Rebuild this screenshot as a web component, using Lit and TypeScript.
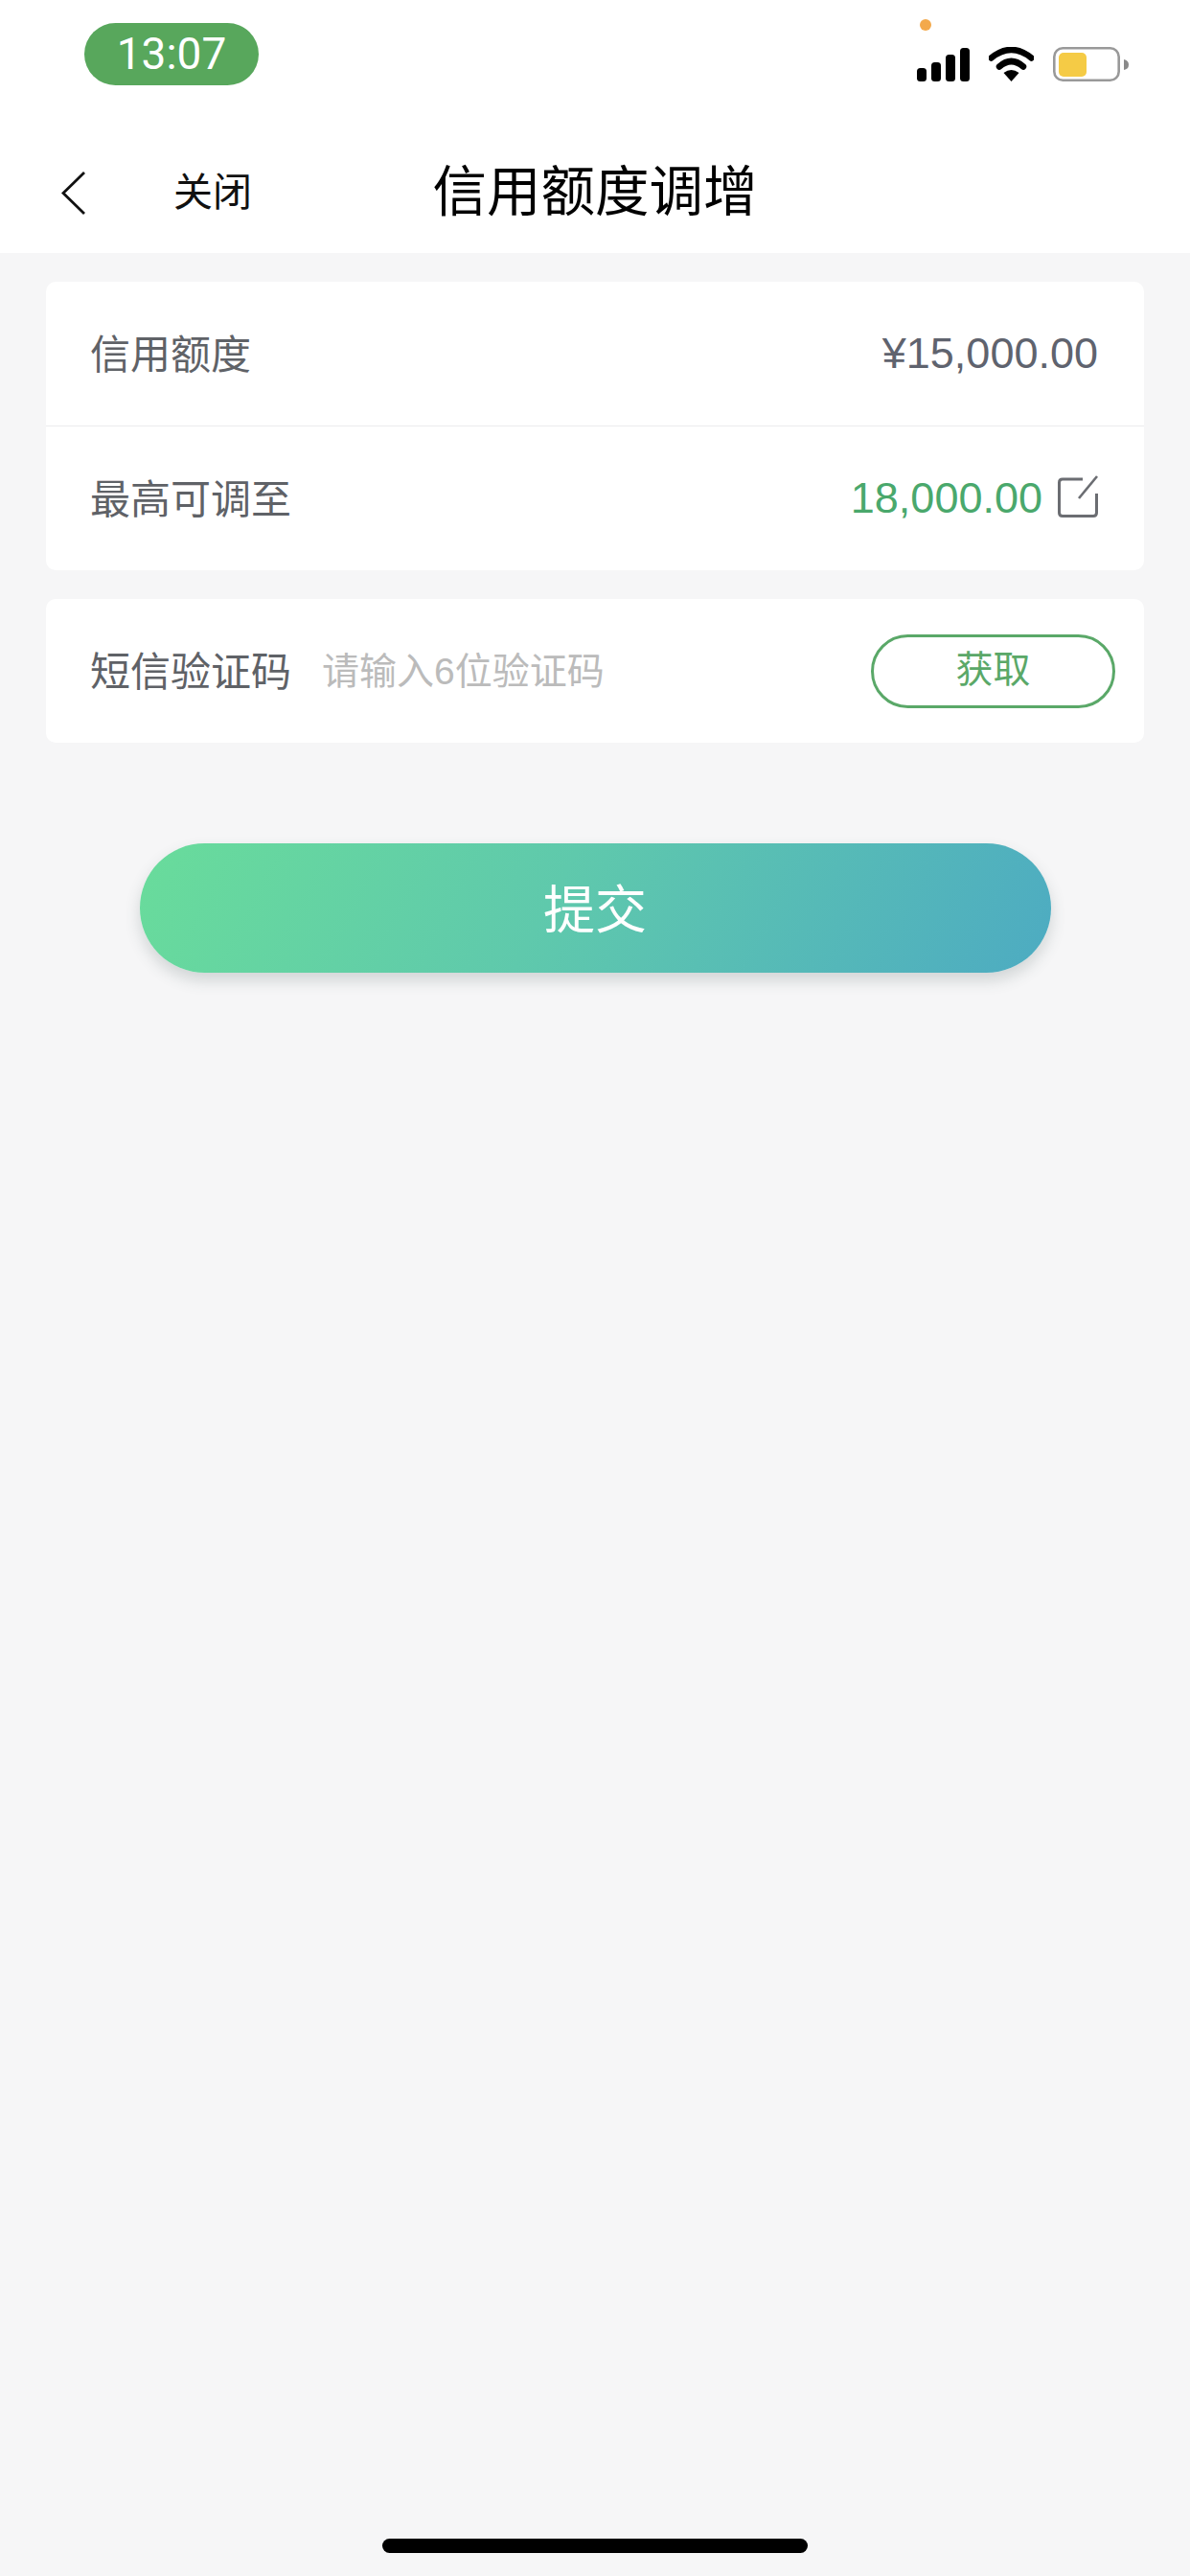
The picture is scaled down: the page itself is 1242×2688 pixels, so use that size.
import { LitElement, html, css } from 'lit';
import { customElement } from 'lit/decorators.js';

@customElement('app-root')
export class AppRoot extends LitElement {
  static styles = css`
    :host {
      display: block;
      font-family: "Liberation Sans", "Noto Sans CJK SC", sans-serif;
    }
    .page {
      width: 1242px;
      height: 2688px;
      background: #f6f6f7;
      display: flex;
      flex-direction: column;
    }
    .top {
      background: #fff;
      height: 264px;
      flex: none;
    }
    .status {
      height: 110px;
      display: flex;
      justify-content: space-between;
      position: relative;
    }
    .time {
      margin: 24px 0 0 88px;
      width: 182px;
      height: 65px;
      border-radius: 33px;
      background: #58a75c;
      color: #fff;
      font: 46px/65px Roboto, sans-serif;
      text-align: center;
    }
    .dot {
      position: absolute;
      left: 960px;
      top: 20px;
      width: 12px;
      height: 12px;
      border-radius: 50%;
      background: #f3a94b;
    }
    .sys {
      display: flex;
      align-items: flex-start;
      gap: 20px;
      margin: 49px 64px 0 0;
    }
    .sys svg { display: block; }
    .nav {
      height: 154px;
      padding-top: 28px;
      box-sizing: border-box;
      display: grid;
      grid-template-columns: 1fr auto 1fr;
      align-items: center;
    }
    .nav-left {
      display: flex;
      align-items: center;
      padding-left: 64px;
      gap: 92px;
    }
    .nav-left svg { display: block; }
    .close {
      font-size: 41px;
      color: #111;
      line-height: 50px;
    }
    .title {
      font-size: 56.5px;
      color: #000;
      line-height: 70px;
    }
    .content {
      padding: 30px 48px 0;
      display: flex;
      flex-direction: column;
      gap: 30px;
    }
    .card {
      background: #fff;
      border-radius: 10px;
    }
    .row {
      height: 150px;
      display: flex;
      align-items: center;
      padding: 0 48px 0 46px;
      box-sizing: border-box;
    }
    .row + .row {
      height: 151px;
      border-top: 1px solid #ececee;
    }
    .label {
      font-size: 42px;
      color: #5f6267;
      flex: none;
      margin-bottom: 6px;
    }
    .amount {
      margin-left: auto;
      font-size: 45px;
      color: #5f636e;
    }
    .amount.up {
      color: #4aa86c;
      margin-right: 16px;
    }
    .edit { display: block; flex: none; margin-top: -4px; }
    .code { padding-right: 30px; }
    .hint {
      margin-left: 32px;
      font-size: 39px;
      color: #bbbbbb;
      margin-bottom: 6px;
    }
    .get {
      margin-left: auto;
      width: 255px;
      height: 77px;
      box-sizing: border-box;
      border: 3px solid #5aa868;
      border-radius: 39px;
      color: #5aa868;
      font-size: 39px;
      line-height: 68px;
      text-align: center;
    }
    .submit {
      align-self: center;
      margin-top: 105px;
      width: 951px;
      height: 135px;
      border-radius: 68px;
      background: linear-gradient(118deg, #69dc9b 0%, #5fc9ac 45%, #4dabc2 100%);
      box-shadow: 0 8px 16px rgba(60, 80, 80, 0.2);
      color: #fff;
      font-size: 54px;
      line-height: 141px;
      text-align: center;
    }
    .home {
      margin: auto auto 24px;
      width: 444px;
      height: 15px;
      border-radius: 8px;
      background: #000;
    }
  `;

  render() {
    return html`
      <div class="page">
        <div class="top">
          <div class="status">
            <div class="time">13:07</div>
            <div class="dot"></div>
            <div class="sys">
              <svg width="55" height="36" viewBox="0 0 55 36">
                <rect x="0" y="22" width="10" height="14" rx="3.5" />
                <rect x="15" y="16" width="10" height="20" rx="3.5" />
                <rect x="30" y="8" width="10" height="28" rx="3.5" />
                <rect x="45" y="1" width="10" height="35" rx="3.5" />
              </svg>
              <svg width="47" height="36" viewBox="0 0 47 36">
                <path d="M2.5 11.5 Q23.5 -5.5 44.5 11.5" fill="none" stroke="#000" stroke-width="6.5" stroke-linecap="round" />
                <path d="M11 20.5 Q23.5 9.5 36 20.5" fill="none" stroke="#000" stroke-width="6.5" stroke-linecap="round" />
                <path d="M15.5 27 Q23.5 21 31.5 27 L23.5 36 Z" />
              </svg>
              <svg width="79" height="36" viewBox="0 0 79 36">
                <rect x="1.3" y="1.3" width="67.4" height="33.4" rx="9" fill="none" stroke="#999" stroke-width="2.6" />
                <rect x="6" y="6" width="29" height="25" rx="5" fill="#f5cb45" />
                <path d="M74 13 Q79 14 79 18.5 Q79 23 74 24 Z" fill="#8a8a8a" />
              </svg>
            </div>
          </div>
          <div class="nav">
            <div class="nav-left">
              <svg width="25" height="45" viewBox="0 0 25 45">
                <path d="M24 1 L2 22.5 L24 44" fill="none" stroke="#111" stroke-width="2.8" />
              </svg>
              <span class="close">关闭</span>
            </div>
            <div class="title">信用额度调增</div>
          </div>
        </div>

        <div class="content">
          <div class="card">
            <div class="row">
              <span class="label">信用额度</span>
              <span class="amount">¥15,000.00</span>
            </div>
            <div class="row">
              <span class="label">最高可调至</span>
              <span class="amount up">18,000.00</span>
              <svg class="edit" width="42" height="44" viewBox="0 0 42 44">
                <path d="M26 4 H5 Q1.5 4 1.5 7.5 V39 Q1.5 42.5 5 42.5 H37 Q40.5 42.5 40.5 39 V19" fill="none" stroke="#6b6d72" stroke-width="3" />
                <path d="M22 24 L41 1" fill="none" stroke="#6b6d72" stroke-width="2.6" />
              </svg>
            </div>
          </div>
          <div class="card">
            <div class="row code">
              <span class="label">短信验证码</span>
              <span class="hint">请输入6位验证码</span>
              <span class="get">获取</span>
            </div>
          </div>
        </div>

        <div class="submit">提交</div>
        <div class="home"></div>
      </div>
    `;
  }
}
